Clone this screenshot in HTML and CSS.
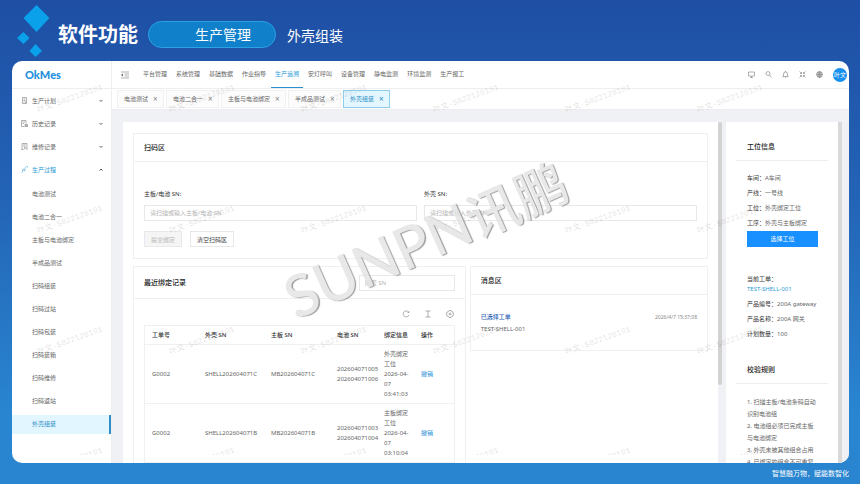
FILE: index.html
```html
<!DOCTYPE html>
<html lang="zh-CN">
<head>
    <meta charset="UTF-8">
    <meta name="viewport" content="width=device-width, initial-scale=1.0">
    <title>OkMes 外壳组装</title>
    <link rel="stylesheet" href="styles.css">
</head>
<body>

<header class="slide-header">
    <svg class="diamonds" viewBox="0 0 32 54">
        <path d="M19.500 3L32.500 16L19.500 30L6.500 16zM6.500 30L12.500 36L6.500 42L0 36zM18.500 42L25 49L18.500 55L12.500 49z" fill="#0ba1ea"/>
    </svg>
    <h1>软件功能</h1>
    <div class="pill">生产管理</div>
    <div class="page-name">外壳组装</div>
</header>

<div class="app">
    <aside class="sidebar">
        <div class="logo">OkMes</div>
        <ul class="menu">
            <li>
                <a href="#" class="menu-item">
                    <svg class="menu-icon" viewBox="0 0 14 14"><path d="M3 1h8v12H3zM5 4h4M5 7h4M5 10h2M9 9v3"/></svg>
                    生产计划
                    <svg class="arrow" viewBox="0 0 8 8"><path d="M1 2l3 3 3-3"/></svg>
                </a>
            </li>
            <li>
                <a href="#" class="menu-item">
                    <svg class="menu-icon" viewBox="0 0 14 14"><path d="M7 13H1V1h9v6M3 4h5M3 7h3M10 8v4h3M8 9h5v4H8z"/></svg>
                    历史记录
                    <svg class="arrow" viewBox="0 0 8 8"><path d="M1 2l3 3 3-3"/></svg>
                </a>
            </li>
            <li>
                <a href="#" class="menu-item">
                    <svg class="menu-icon" viewBox="0 0 14 14"><path d="M2 13V1h10v12M1 13h4M4 4h6M5 7h3M7 8l5 5M9 8l-3 5"/></svg>
                    维修记录
                    <svg class="arrow" viewBox="0 0 8 8"><path d="M1 2l3 3 3-3"/></svg>
                </a>
            </li>
            <li>
                <a href="#" class="menu-item open">
                    <svg class="menu-icon" viewBox="0 0 14 14"><path d="M1 13l2-1V8l3-2v4l2-1V4l3-3M11 1h2v2"/></svg>
                    生产过程
                    <svg class="arrow" viewBox="0 0 8 8"><path d="M1 5l3-3 3 3"/></svg>
                </a>
                <ul class="submenu">
                    <li><a href="#">电池测试</a></li>
                    <li><a href="#">电池二合一</a></li>
                    <li><a href="#">主板与电池绑定</a></li>
                    <li><a href="#">半成品测试</a></li>
                    <li><a href="#">扫码组装</a></li>
                    <li><a href="#">扫码过站</a></li>
                    <li><a href="#">扫码包装</a></li>
                    <li><a href="#">扫码装箱</a></li>
                    <li><a href="#">扫码维修</a></li>
                    <li><a href="#">扫码返站</a></li>
                    <li><a href="#" class="active">外壳组装</a></li>
                </ul>
            </li>
        </ul>
    </aside>

    <div class="workspace">
        <div class="topbar">
            <svg class="fold" viewBox="0 0 16 16"><path d="M0 2h16M7 6h9M7 10h9M0 14h16"/><path d="M4 5v6L0 8z" class="solid"/></svg>
            <nav class="top-nav">
                <a href="#">平台管理</a>
                <a href="#">系统管理</a>
                <a href="#">基础数据</a>
                <a href="#">作业指导</a>
                <a href="#" class="active">生产追溯</a>
                <a href="#">安灯呼叫</a>
                <a href="#">设备管理</a>
                <a href="#">静电监测</a>
                <a href="#">环境监测</a>
                <a href="#">生产报工</a>
            </nav>
            <div class="tools">
                <svg viewBox="0 0 14 14"><path d="M1 2h12v8H1zM4 13h6M7 10v3"/></svg>
                <svg viewBox="0 0 14 14"><circle cx="6" cy="5" r="4"/><path d="M9 8l4 5"/></svg>
                <svg viewBox="0 0 14 14"><path d="M3 11V6a4 4 0 0 1 8 0v5M1 11h12M6 13h2M7 0v2"/></svg>
                <svg viewBox="0 0 14 14"><path d="M1 1l4 4M5 2v3H2M13 1L9 5M9 2v3h3M1 13l4-4M2 9h3v3M13 13L9 9M12 9H9v3"/></svg>
                <svg viewBox="0 0 14 14"><circle cx="7" cy="7" r="6"/><path d="M1 7h12M7 1v12M2 4h10M2 10h10M7 1C3 4 3 10 7 13M7 1c4 3 4 9 0 12"/></svg>
                <span class="avatar">叶文</span>
            </div>
        </div>

        <div class="tabs">
            <a href="#" class="tab">电池测试<span>×</span></a>
            <a href="#" class="tab">电池二合一<span>×</span></a>
            <a href="#" class="tab">主板与电池绑定<span>×</span></a>
            <a href="#" class="tab">半成品测试<span>×</span></a>
            <a href="#" class="tab active">外壳组装<span>×</span></a>
        </div>

        <div class="content">
            <main class="main">
                <section class="card">
                    <h2>扫码区</h2>
                    <form class="scan-form">
                        <div class="fields">
                            <div class="field">
                                <label for="boardSn">主板/电池 SN:</label>
                                <input type="text" id="boardSn" placeholder="请扫描或输入主板/电池 SN">
                            </div>
                            <div class="field">
                                <label for="shellSn">外壳 SN:</label>
                                <input type="text" id="shellSn" placeholder="请扫描或输入外壳 SN">
                            </div>
                        </div>
                        <div class="buttons">
                            <button type="button" disabled>提交绑定</button>
                            <button type="button">清空扫码区</button>
                        </div>
                    </form>
                </section>

                <div class="lower">
                    <section class="card records">
                        <div class="records-head">
                            <h2>最近绑定记录</h2>
                            <input type="text" aria-label="搜索 SN" placeholder="搜索 SN">
                        </div>
                        <div class="records-body">
                            <div class="table-tools">
                                <svg viewBox="0 0 16 16"><path d="M13 4a6 6 0 1 0 1 6M14 2v3h-3"/></svg>
                                <svg viewBox="0 0 16 16"><path d="M3 2h10M3 14h10M8 2v12"/></svg>
                                <svg viewBox="0 0 16 16"><path d="M6 1h4l1 2 3 1 1 4-1 4-3 1-1 2H6l-1-2-3-1-1-4 1-4 3-1z"/><circle cx="8" cy="8" r="2"/></svg>
                            </div>
                            <table>
                                <thead>
                                    <tr>
                                        <th class="col-order">工单号</th>
                                        <th class="col-sn">外壳 SN</th>
                                        <th class="col-sn">主板 SN</th>
                                        <th class="col-battery">电池 SN</th>
                                        <th class="col-info">绑定信息</th>
                                        <th>操作</th>
                                    </tr>
                                </thead>
                                <tbody>
                                    <tr>
                                        <td>G0002</td>
                                        <td>SHELL202604071C</td>
                                        <td>MB202604071C</td>
                                        <td>202604071005<br>202604071006</td>
                                        <td>外壳绑定<br>工位<br>2026-04-<br>07<br>03:41:03</td>
                                        <td><a href="#">撤销</a></td>
                                    </tr>
                                    <tr>
                                        <td>G0002</td>
                                        <td>SHELL202604071B</td>
                                        <td>MB202604071B</td>
                                        <td>202604071003<br>202604071004</td>
                                        <td>主板绑定<br>工位<br>2026-04-<br>07<br>03:10:04</td>
                                        <td><a href="#">撤销</a></td>
                                    </tr>
                                </tbody>
                            </table>
                        </div>
                    </section>

                    <section class="card messages">
                        <h2>消息区</h2>
                        <div class="message">
                            <div>
                                <strong>已选择工单</strong>
                                <p>TEST-SHELL-001</p>
                            </div>
                            <time>2026/4/7 15:37:08</time>
                        </div>
                    </section>
                </div>
            </main>
            <div class="scrollbar"><div class="thumb"></div></div>

            <aside class="side">
                <h2>工位信息</h2>
                <div class="side-body">
                    <p><b>车间：</b>A车间</p>
                    <p><b>产线：</b>一号线</p>
                    <p><b>工位：</b>外壳绑定工位</p>
                    <p><b>工序：</b>外壳与主板绑定</p>
                    <button type="button" class="primary">选择工位</button>
                    <div class="order">
                        <b>当前工单：</b>
                        <a href="#">TEST-SHELL-001</a>
                    </div>
                    <p><b>产品编号：</b>200A gateway</p>
                    <p><b>产品名称：</b>200A 网关</p>
                    <p><b>计划数量：</b>100</p>
                </div>
                <h2>校验规则</h2>
                <div class="side-body rules">
                    <div>1. 扫描主板/电池条码自动<br>识别电池组</div>
                    <div>2. 电池组必须已完成主板<br>与电池绑定</div>
                    <div>3. 外壳未被其他组合占用</div>
                    <div>4. 已绑定的组合不可重复</div>
                </div>
            </aside>
        </div>
    </div>

    <div class="watermarks" id="watermarks"></div>
    <div class="brand-mark"><span>SUNPN</span>讯鹏</div>
</div>

<footer>智慧融万物，赋能数智化</footer>

<script>
    const layer = document.getElementById('watermarks');
    for (let i = 0; i < 24; i++) {
        const mark = document.createElement('span');
        mark.textContent = '叶文-S022120101';
        layer.appendChild(mark);
    }
</script>

</body>
</html>
```
FILE: styles.css
```css
* {
    box-sizing: border-box;
}

body {
    margin: 0;
    height: 100vh;
    display: flex;
    flex-direction: column;
    overflow: hidden;
    font-family: "Noto Sans", "Noto Sans CJK SC", sans-serif;
    font-size: 6px;
    color: #666;
    background: linear-gradient(#1e4fa5, #2363b5 40%, #2985d0 85%);
}

h1, h2, p, ul {
    margin: 0;
    padding: 0;
    list-style: none;
}

a {
    color: inherit;
    text-decoration: none;
}

svg {
    fill: none;
    stroke: currentColor;
}

button, input {
    font: inherit;
    border: 1px solid #e8e8e8;
    background: #fff;
    color: #444;
}

input {
    height: 16px;
    padding: 0 5px;
}

input::placeholder {
    color: #b5b5b5;
}

h2 {
    font-size: 7px;
    line-height: 10px;
    font-weight: 500;
    color: #222;
}

/* slide header */
.slide-header {
    flex: none;
    display: flex;
    align-items: center;
    height: 61px;
    padding: 8px 17px 0;
    color: #fff;
}

.diamonds {
    width: 32px;
    height: 56px;
    margin: -12px 9px 0 0;
    stroke: none;
}

.slide-header h1 {
    font-size: 20px;
    line-height: 26px;
}

.pill {
    width: 128px;
    height: 27px;
    margin: 0 11px 0 10px;
    padding-left: 46px;
    border: 1px solid #2ba3e3;
    border-radius: 14px;
    background: #1180cb;
    font-size: 14px;
    line-height: 25px;
}

.page-name {
    font-size: 14px;
}

/* app window */
.app {
    flex: 1;
    min-height: 0;
    position: relative;
    display: flex;
    margin: 0 11px 0 12px;
    border-radius: 10px;
    background: #fff;
    overflow: hidden;
}

.sidebar {
    flex: none;
    width: 100px;
    border-right: 1px solid #eee;
}

.logo {
    height: 28px;
    padding-left: 13px;
    border-bottom: 1px solid #eee;
    font-family: "Lato", sans-serif;
    font-size: 11px;
    line-height: 28px;
    font-weight: 900;
    color: #2490db;
}

.menu-item {
    display: flex;
    align-items: center;
    gap: 4px;
    height: 23px;
    padding: 0 8px 0 9px;
}

.menu-icon {
    width: 7px;
    height: 7px;
}

.arrow {
    width: 4px;
    height: 4px;
    margin-left: auto;
    stroke-width: 2;
}

.menu-item.open {
    color: #2a9bd6;
}

.menu-item.open .arrow {
    color: #555;
}

.submenu {
    padding-top: 4px;
}

.submenu a {
    display: block;
    height: 19px;
    margin-bottom: 4px;
    padding-left: 20px;
    line-height: 19px;
}

.submenu .active {
    background: #e2f6ff;
    border-right: 2px solid #2f8fc9;
    color: #2a8cc4;
}

.workspace {
    flex: 1;
    min-width: 0;
    display: flex;
    flex-direction: column;
}

.topbar {
    flex: none;
    display: flex;
    align-items: center;
    height: 28px;
    padding: 0 2px 0 9px;
    border-bottom: 1px solid #eee;
}

.fold {
    width: 8px;
    height: 8px;
}

.fold .solid {
    fill: currentColor;
    stroke: none;
}

.top-nav {
    display: flex;
    gap: 1px;
    margin-left: 10px;
}

.top-nav a {
    padding: 0 4px;
    line-height: 26px;
    border-bottom: 1px solid transparent;
}

.top-nav .active {
    color: #2a9bd6;
    border-color: #2a8fd0;
}

.tools {
    display: flex;
    align-items: center;
    gap: 10px;
    margin-left: auto;
}

.tools svg {
    width: 7px;
    height: 7px;
}

.avatar {
    width: 14px;
    border-radius: 50%;
    background: #1890f0;
    color: #fff;
    line-height: 14px;
    text-align: center;
}

.tabs {
    flex: none;
    display: flex;
    align-items: center;
    gap: 2px;
    height: 21px;
    padding: 0 5px;
    border-bottom: 1px solid #eee;
}

.tab {
    display: flex;
    gap: 5px;
    padding: 0 6px;
    border: 1px solid #f1f1f1;
    background: #fcfcfc;
    line-height: 16px;
}

.tab span {
    width: 4px;
    font-size: 8px;
    color: #888;
}

.tab.active {
    border-color: #8fcdee;
    background: #e4f6ff;
    color: #2a8cc4;
}

.tab.active span {
    color: #2a8cc4;
}

.content {
    flex: 1;
    min-height: 0;
    display: flex;
    padding: 12px 7px 0 11px;
    background: #f0f1f4;
}

.main {
    flex: 1;
    min-width: 0;
    padding: 11px 10px 0;
    background: #fff;
    overflow: hidden;
}

.scrollbar {
    flex: none;
    width: 4px;
    margin-right: 4px;
}

.thumb {
    height: 77%;
    border-radius: 2px;
    background: #d2d2d2;
}

.card {
    border: 1px solid #f0f0f0;
    background: #fff;
}

.card > h2 {
    padding: 9px 10px 8px;
    border-bottom: 1px solid #f0f0f0;
}

.scan-form {
    padding: 27px 10px 11px;
}

.fields {
    display: flex;
    gap: 7px;
}

.field {
    flex: 1;
}

.field label {
    display: block;
    line-height: 10px;
    margin-bottom: 6px;
    color: #333;
}

.field input {
    width: 100%;
}

.buttons {
    display: flex;
    gap: 8px;
    margin-top: 10px;
}

.buttons button {
    height: 16px;
    padding: 0 6px;
}

.buttons button:disabled {
    background: #f5f5f5;
    color: #b5b5b5;
}

.lower {
    display: flex;
    align-items: flex-start;
    gap: 4px;
    margin-top: 7px;
}

.records {
    flex: 7;
    min-width: 0;
}

.messages {
    flex: 5;
    min-width: 0;
}

.records-head {
    display: flex;
    align-items: center;
    justify-content: space-between;
    height: 32px;
    padding: 0 10px;
    border-bottom: 1px solid #f0f0f0;
}

.records-head input {
    width: 96px;
}

.records-body {
    padding: 11px 10px;
}

.table-tools {
    display: flex;
    justify-content: flex-end;
    gap: 14px;
    padding: 0 1px 7px 0;
}

.table-tools svg {
    width: 8px;
    height: 8px;
}

table {
    width: 100%;
    table-layout: fixed;
    border: 1px solid #f0f0f0;
    border-spacing: 0;
}

th, td {
    padding: 4px 0 4px 7px;
    border-bottom: 1px solid #f0f0f0;
    line-height: 10px;
    text-align: left;
    white-space: nowrap;
}

th {
    font-weight: 500;
    color: #333;
}

.col-order {
    width: 53px;
}

.col-sn {
    width: 66px;
}

.col-battery {
    width: 47px;
}

.col-info {
    width: 37px;
}

td a {
    color: #2a8fd8;
}

.message {
    display: flex;
    justify-content: space-between;
    padding: 16px 10px 15px;
    line-height: 12px;
}

.message strong {
    font-weight: 500;
    color: #2a62b8;
}

.message time {
    font-size: 5px;
    color: #888;
}

/* station panel */
.side {
    flex: none;
    width: 116px;
    padding: 10px 10px 0;
    border-right: 4px solid #d9d9d9;
    background: #fff;
    overflow: hidden;
}

.side h2 {
    padding: 10px 11px 8px;
    border-bottom: 1px solid #eee;
}

.side-body {
    padding: 10px 10px 13px 11px;
    line-height: 15px;
}

.side-body b {
    font-weight: 400;
    color: #333;
}

.primary {
    width: 100%;
    height: 16px;
    border: 0;
    background: #1890ff;
    color: #fff;
}

.order {
    display: flex;
    flex-direction: column;
    margin: 27px 0 3px;
    line-height: 10px;
}

.order a {
    color: #2a9bd6;
}

.rules {
    padding-top: 12px;
    padding-right: 0;
    line-height: 12px;
    white-space: nowrap;
}

/* overlays */
.watermarks {
    position: absolute;
    inset: 0 0 8px;
    display: grid;
    grid-template-columns: repeat(6, 132px);
    grid-auto-rows: 121px;
    overflow: hidden;
    pointer-events: none;
    font: 8px "Liberation Mono", "Noto Sans CJK SC", monospace;
    color: rgba(0, 0, 0, 0.14);
}

.watermarks span {
    justify-self: start;
    align-self: start;
    margin: 31px 0 0 23px;
    white-space: nowrap;
    transform: rotate(-20deg);
}

.brand-mark {
    position: absolute;
    left: 50%;
    top: 44%;
    margin-left: -6px;
    transform: translate(-50%, -50%) rotate(-24deg);
    font: 52px "Lato", "Noto Sans CJK SC", sans-serif;
    font-weight: 500;
    color: #e4e4e4;
    text-shadow: 1px 1px 1px #888;
    opacity: 0.85;
    white-space: nowrap;
    pointer-events: none;
}

.brand-mark span {
    font-size: 58px;
}

footer {
    flex: none;
    height: 21px;
    padding-right: 11px;
    font-size: 7px;
    line-height: 21px;
    text-align: right;
    color: #fff;
}
```
